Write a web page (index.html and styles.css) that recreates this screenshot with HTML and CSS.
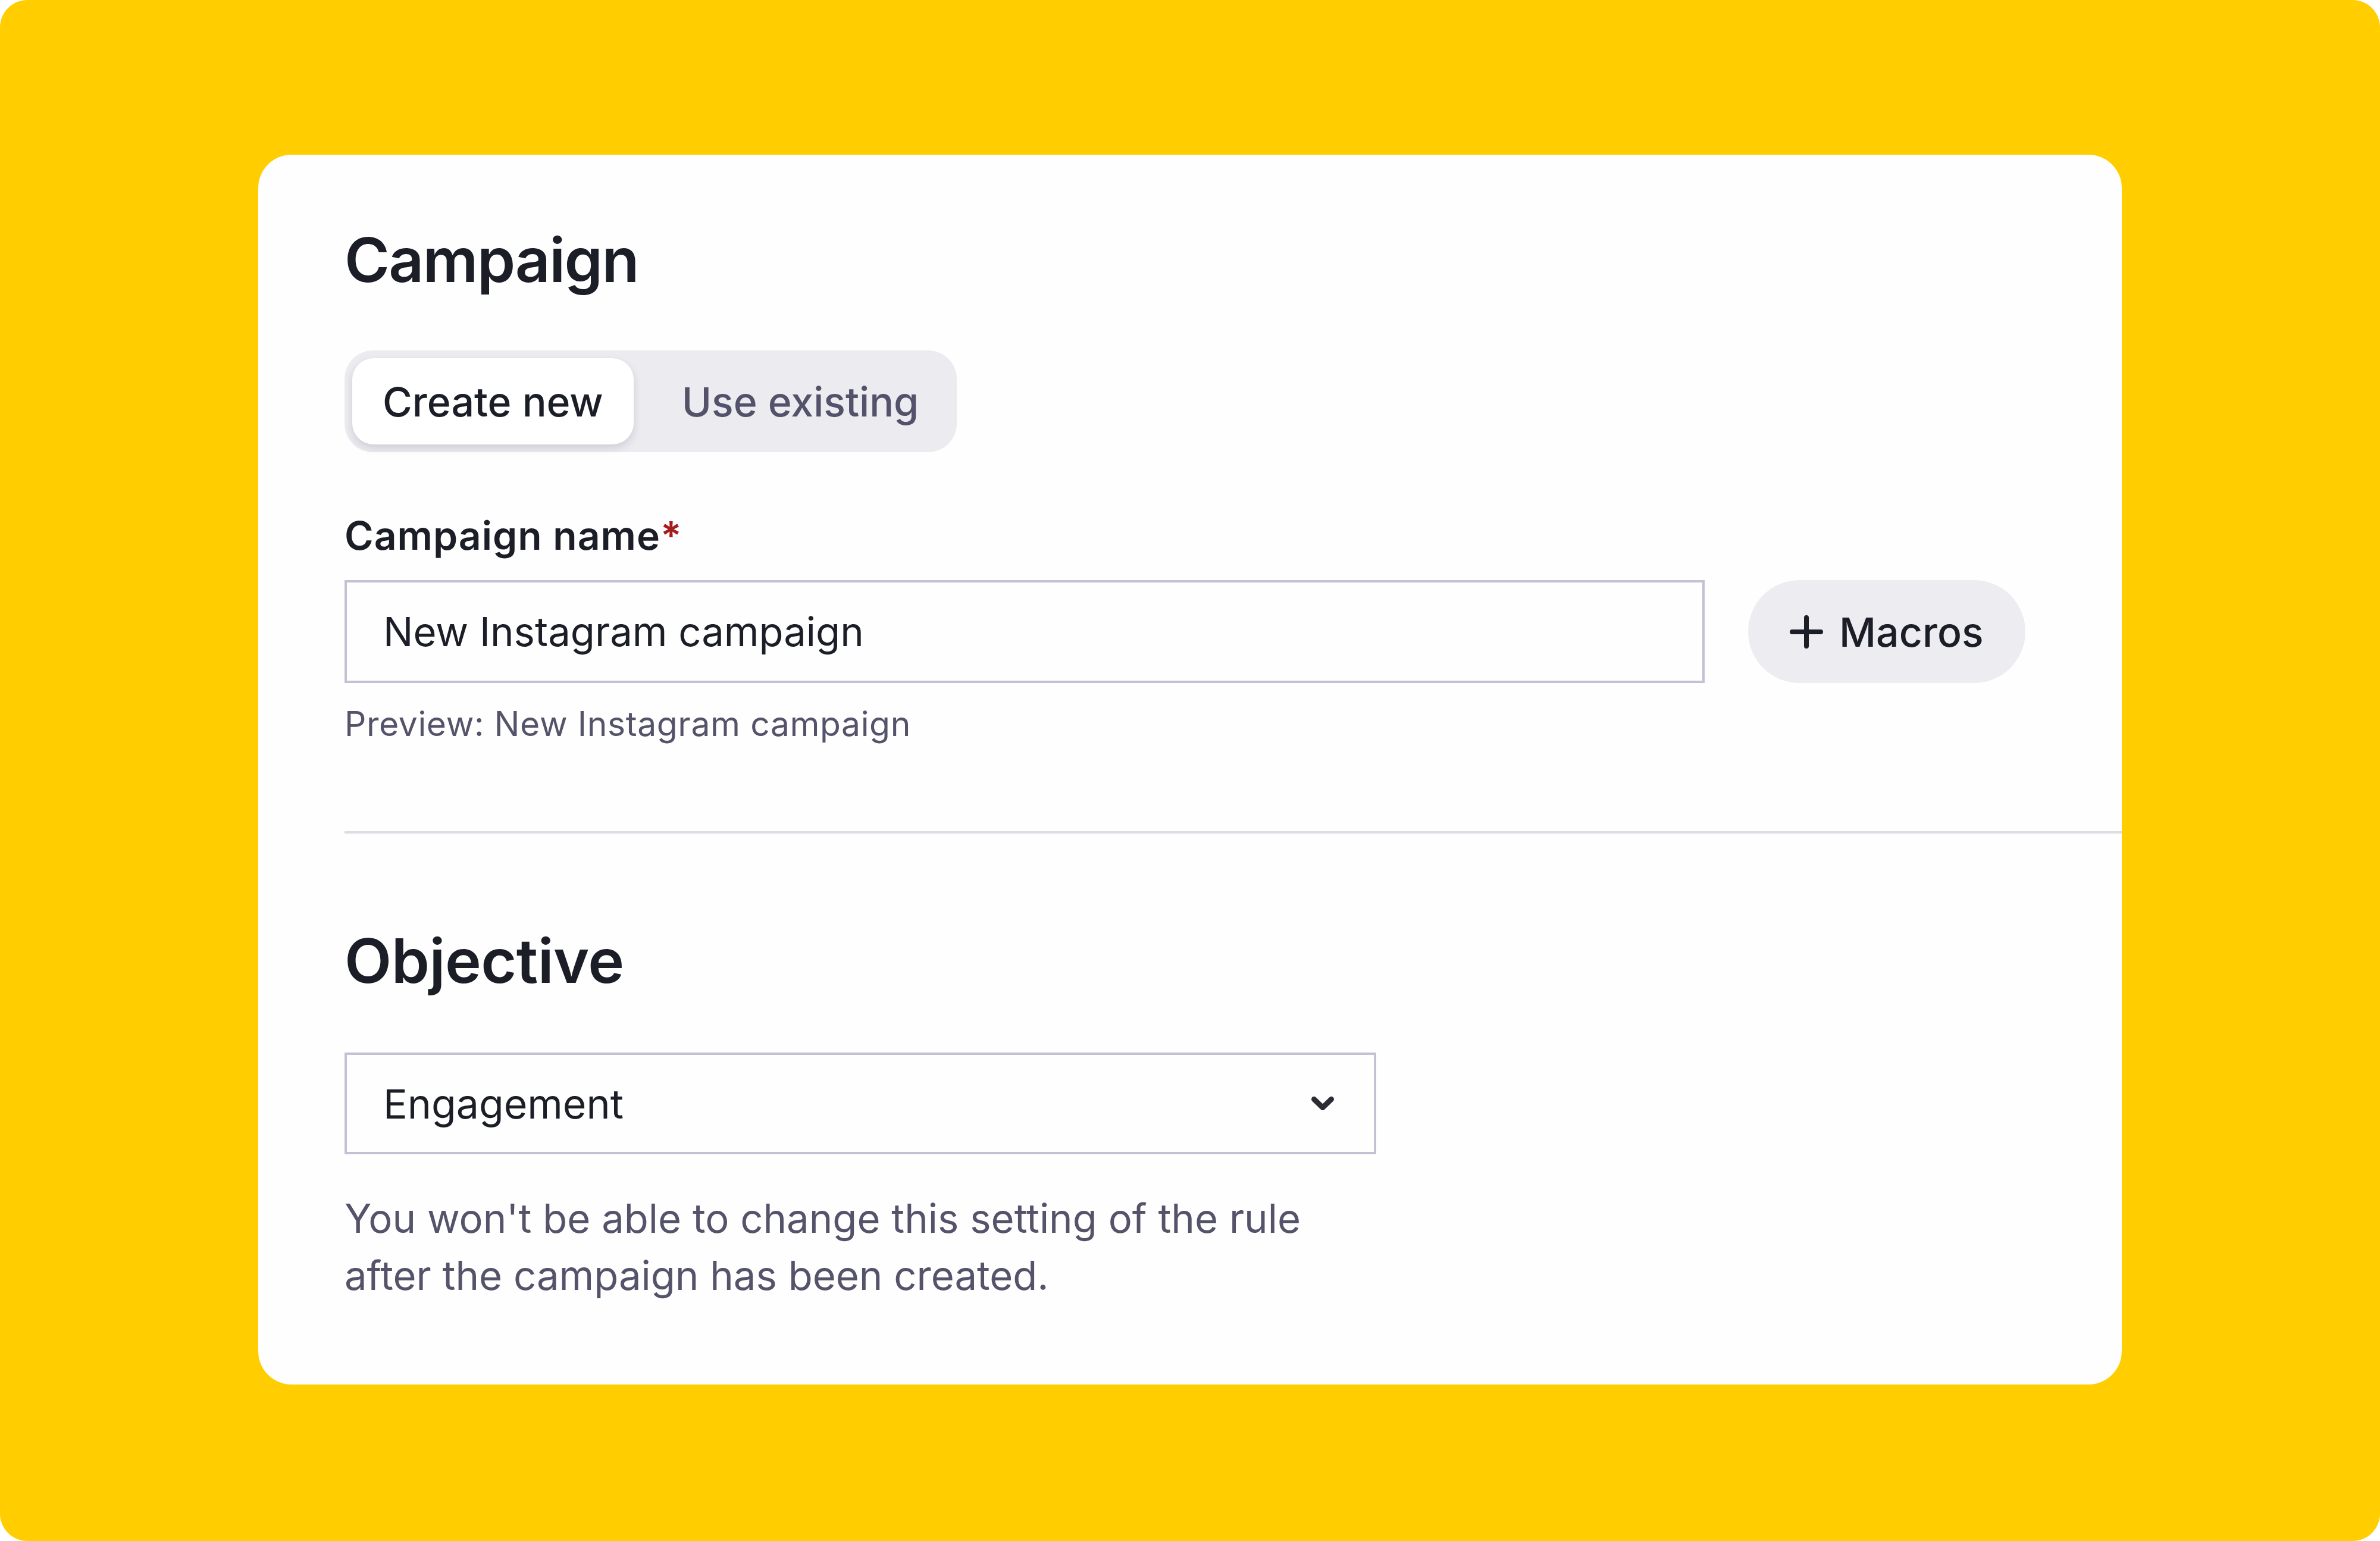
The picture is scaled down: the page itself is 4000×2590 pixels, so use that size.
FILE: index.html
```html
<!DOCTYPE html>
<html lang="en">
<head>
<meta charset="utf-8">
<title>Campaign</title>
<link rel="stylesheet" href="styles.css">
</head>
<body>
<div class="frame">
  <section class="card">
    <h2 class="heading heading-camp">Campaign</h2>
    <div class="segmented">
      <button class="seg seg-active" type="button">Create new</button>
      <button class="seg" type="button">Use existing</button>
    </div>
    <label class="label">Campaign name<span class="req">*</span></label>
    <div class="input-row">
      <div class="input">New Instagram campaign</div>
      <button class="macros" type="button">
        <svg class="plus" viewBox="0 0 56 56" width="56" height="56" aria-hidden="true"><path d="M28 4V52M4 28H52" fill="none" stroke="#1b1e27" stroke-width="8" stroke-linecap="round"/></svg>
        <span>Macros</span>
      </button>
    </div>
    <p class="preview">Preview: New Instagram campaign</p>
    <hr class="divider">
    <h2 class="heading heading-obj">Objective</h2>
    <div class="select">
      <span>Engagement</span>
      <svg class="chev" viewBox="0 0 38 23" width="38" height="23" aria-hidden="true"><path d="M4.5 4.5L19 18.5L33.5 4.5" fill="none" stroke="#2a2b33" stroke-width="9" stroke-linecap="round" stroke-linejoin="round"/></svg>
    </div>
    <p class="help">You won't be able to change this setting of the rule<br>after the campaign has been created.</p>
  </section>
</div>
</body>
</html>
```

FILE: styles.css
```css
* { box-sizing: border-box; }

html, body {
  margin: 0;
  padding: 0;
  background: #ffffff;
}

body {
  font-family: "Inter", "Liberation Sans", sans-serif;
  color: #1b1e27;
}

.frame {
  width: 4000px;
  height: 2590px;
  background: #ffcd00;
  border-radius: 46px;
  overflow: hidden;
  padding: 260px 0 0 434px;
}

.card {
  width: 3132px;
  height: 2067px;
  background: #fefefe;
  border-radius: 56px;
  padding: 115px 0 0 145px;
  display: flex;
  flex-direction: column;
  align-items: flex-start;
}

.heading {
  margin: 0;
  font-size: 103px;
  line-height: 124px;
  font-weight: 600;
  letter-spacing: -0.5px;
  color: #1b1e27;
}

.heading-camp { letter-spacing: -1.6px; }

.segmented {
  margin-top: 90px;
  display: flex;
  gap: 30px;
  padding: 13px;
  background: #ebebf0;
  border-radius: 48px;
}

.seg {
  border: 0;
  margin: 0;
  height: 145px;
  padding: 0 51px;
  font-family: inherit;
  font-size: 68px;
  font-weight: 500;
  color: #54526a;
  background: transparent;
  border-radius: 36px;
}

.seg-active {
  background: #ffffff;
  color: #1b1e27;
  box-shadow: 0 6px 14px rgba(30, 30, 50, 0.14);
}

.label {
  margin-top: 100px;
  font-size: 66px;
  line-height: 80px;
  font-weight: 600;
  letter-spacing: 1px;
  color: #1b1e27;
}

.req { color: #a51d1d; }

.input-row {
  margin-top: 35px;
  display: flex;
  gap: 73px;
  align-items: stretch;
}

.input {
  width: 2286px;
  height: 173px;
  border: 4px solid #c3c2d3;
  padding-left: 61px;
  display: flex;
  align-items: center;
  font-size: 67px;
  color: #1b1e27;
}

.macros {
  border: 0;
  margin: 0;
  height: 173px;
  padding: 0 70px 0 70px;
  display: flex;
  align-items: center;
  gap: 27px;
  background: #ececf1;
  border-radius: 87px;
  font-family: inherit;
  font-size: 68px;
  font-weight: 500;
  color: #1b1e27;
}

.plus { display: block; }

.preview {
  margin: 34px 0 0;
  font-size: 57px;
  line-height: 70px;
  letter-spacing: 0.6px;
  color: #55536a;
}

.divider {
  align-self: stretch;
  margin: 145px 0 0;
  height: 4px;
  border: 0;
  background: #dedde6;
}

.heading-obj { margin-top: 152px; }

.select {
  margin-top: 92px;
  width: 1734px;
  height: 171px;
  border: 4px solid #c3c2d3;
  padding: 0 67px 0 61px;
  display: flex;
  align-items: center;
  justify-content: space-between;
  font-size: 68px;
  color: #1b1e27;
}

.chev { display: block; }

.help {
  margin: 60px 0 0;
  font-size: 67px;
  line-height: 96px;
  color: #55536a;
}
```
